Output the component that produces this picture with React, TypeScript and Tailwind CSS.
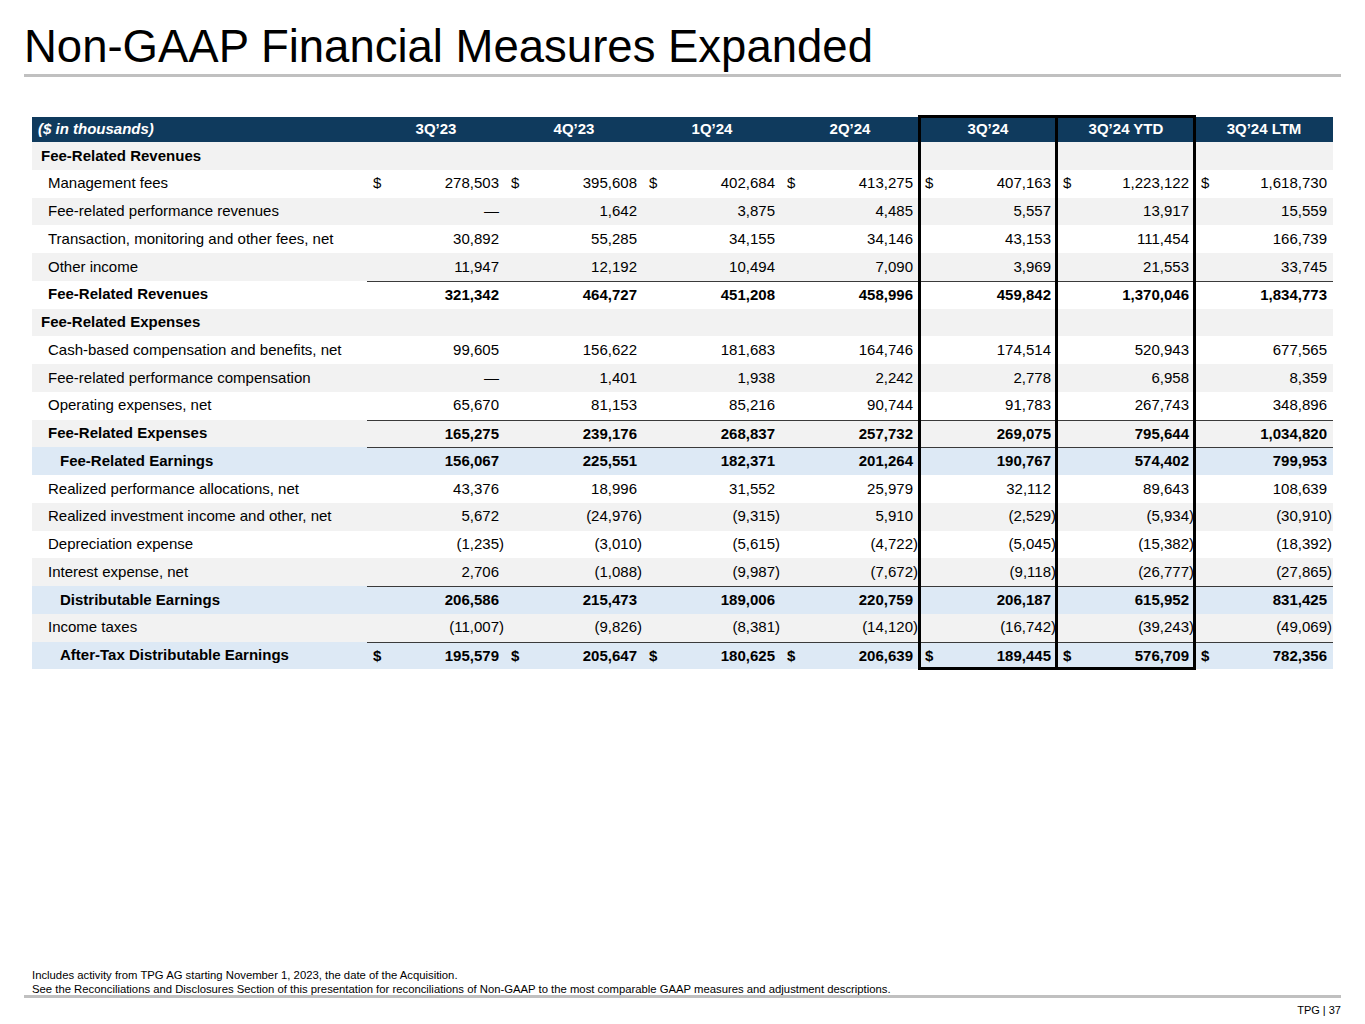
import React from "react";

type Row = {
  label: string;
  kind: "section" | "item" | "total" | "earn";
  bg: "w" | "g" | "b";
  vals?: string[];
  dollar?: boolean;
  line?: boolean;
};

const rows: Row[] = [
  { label: "Fee-Related Revenues", kind: "section", bg: "g" },
  { label: "Management fees", kind: "item", bg: "w", dollar: true, vals: ["278,503", "395,608", "402,684", "413,275", "407,163", "1,223,122", "1,618,730"] },
  { label: "Fee-related performance revenues", kind: "item", bg: "g", vals: ["—", "1,642", "3,875", "4,485", "5,557", "13,917", "15,559"] },
  { label: "Transaction, monitoring and other fees, net", kind: "item", bg: "w", vals: ["30,892", "55,285", "34,155", "34,146", "43,153", "111,454", "166,739"] },
  { label: "Other income", kind: "item", bg: "g", vals: ["11,947", "12,192", "10,494", "7,090", "3,969", "21,553", "33,745"] },
  { label: "Fee-Related Revenues", kind: "total", bg: "w", line: true, vals: ["321,342", "464,727", "451,208", "458,996", "459,842", "1,370,046", "1,834,773"] },
  { label: "Fee-Related Expenses", kind: "section", bg: "g" },
  { label: "Cash-based compensation and benefits, net", kind: "item", bg: "w", vals: ["99,605", "156,622", "181,683", "164,746", "174,514", "520,943", "677,565"] },
  { label: "Fee-related performance compensation", kind: "item", bg: "g", vals: ["—", "1,401", "1,938", "2,242", "2,778", "6,958", "8,359"] },
  { label: "Operating expenses, net", kind: "item", bg: "w", vals: ["65,670", "81,153", "85,216", "90,744", "91,783", "267,743", "348,896"] },
  { label: "Fee-Related Expenses", kind: "total", bg: "g", line: true, vals: ["165,275", "239,176", "268,837", "257,732", "269,075", "795,644", "1,034,820"] },
  { label: "Fee-Related Earnings", kind: "earn", bg: "b", line: true, vals: ["156,067", "225,551", "182,371", "201,264", "190,767", "574,402", "799,953"] },
  { label: "Realized performance allocations, net", kind: "item", bg: "w", vals: ["43,376", "18,996", "31,552", "25,979", "32,112", "89,643", "108,639"] },
  { label: "Realized investment income and other, net", kind: "item", bg: "g", vals: ["5,672", "(24,976)", "(9,315)", "5,910", "(2,529)", "(5,934)", "(30,910)"] },
  { label: "Depreciation expense", kind: "item", bg: "w", vals: ["(1,235)", "(3,010)", "(5,615)", "(4,722)", "(5,045)", "(15,382)", "(18,392)"] },
  { label: "Interest expense, net", kind: "item", bg: "g", vals: ["2,706", "(1,088)", "(9,987)", "(7,672)", "(9,118)", "(26,777)", "(27,865)"] },
  { label: "Distributable Earnings", kind: "earn", bg: "b", line: true, vals: ["206,586", "215,473", "189,006", "220,759", "206,187", "615,952", "831,425"] },
  { label: "Income taxes", kind: "item", bg: "g", vals: ["(11,007)", "(9,826)", "(8,381)", "(14,120)", "(16,742)", "(39,243)", "(49,069)"] },
  { label: "After-Tax Distributable Earnings", kind: "earn", bg: "b", line: true, dollar: true, vals: ["195,579", "205,647", "180,625", "206,639", "189,445", "576,709", "782,356"] },
];

const headers = ["3Q’23", "4Q’23", "1Q’24", "2Q’24", "3Q’24", "3Q’24 YTD", "3Q’24 LTM"];

function bgClass(b: Row["bg"]) {
  if (b === "g") return "bg-[#f2f2f2]";
  if (b === "b") return "bg-[#dde9f5]";
  return "bg-white";
}

function labelClass(k: Row["kind"]) {
  if (k === "section") return "pl-[9px] font-bold";
  if (k === "total") return "pl-[16px] font-bold";
  if (k === "earn") return "pl-[28px] font-bold";
  return "pl-[16px]";
}

function ValueCell({ v, dollar, bold, line }: { v: string; dollar?: boolean; bold: boolean; line?: boolean }) {
  const neg = v.startsWith("(");
  const num = neg ? v.slice(0, -1) : v;
  return (
    <div
      className={`flex items-center justify-between pl-[6px] pr-[1px] ${bold ? "font-bold" : ""} ${line ? "border-t border-[#3a3a3a]" : ""}`}
    >
      <span>{dollar ? "$" : ""}</span>
      <span className="flex">
        <span>{num}</span>
        <span className={neg ? "" : "invisible"}>)</span>
      </span>
    </div>
  );
}

export default function App() {
  return (
    <div className="w-[1365px] h-[1024px] bg-white flex flex-col text-black font-['Liberation_Sans',Arial,sans-serif]">
      <div className="px-[24px] pt-[24px]">
        <h1 className="text-[45.5px] leading-[45px] font-normal">Non-GAAP Financial Measures Expanded</h1>
        <div className="mt-[5px] h-[3px] bg-[#c0c0c0]" />
      </div>

      <div className="relative ml-[32px] mt-[40px] w-[1301px] text-[15px]">
        <div className="grid grid-cols-[335px_repeat(7,138px)] h-[25px] bg-[#0f3a5d] text-white font-bold items-center">
          <div className="pl-[6px] italic">($ in thousands)</div>
          {headers.map((h) => (
            <div key={h} className="text-center">{h}</div>
          ))}
        </div>
        {rows.map((r, i) => (
          <div key={i} className={`grid grid-cols-[335px_repeat(7,138px)] h-[27.75px] ${bgClass(r.bg)}`}>
            <div className={`flex items-center ${labelClass(r.kind)}`}>{r.label}</div>
            {r.vals
              ? r.vals.map((v, j) => (
                  <ValueCell key={j} v={v} dollar={r.dollar} bold={r.kind !== "item"} line={r.line} />
                ))
              : null}
          </div>
        ))}
        <div className="absolute left-[886px] w-[278px] top-[-2px] bottom-[-1px] border-[3px] border-black">
          <div className="absolute left-[134px] top-0 bottom-0 w-[3px] bg-black" />
        </div>
      </div>

      <div className="mt-auto px-[24px] pb-[7px]">
        <div className="pl-[8px] text-[11.3px] leading-[14px] mb-[-1px]">
          <p>Includes activity from TPG AG starting November 1, 2023, the date of the Acquisition.</p>
          <p>See the Reconciliations and Disclosures Section of this presentation for reconciliations of Non-GAAP to the most comparable GAAP measures and adjustment descriptions.</p>
        </div>
        <div className="h-[3px] bg-[#c0c0c0]" />
        <div className="mt-[5px] text-right text-[11px] leading-[14px]">TPG | 37</div>
      </div>
    </div>
  );
}
